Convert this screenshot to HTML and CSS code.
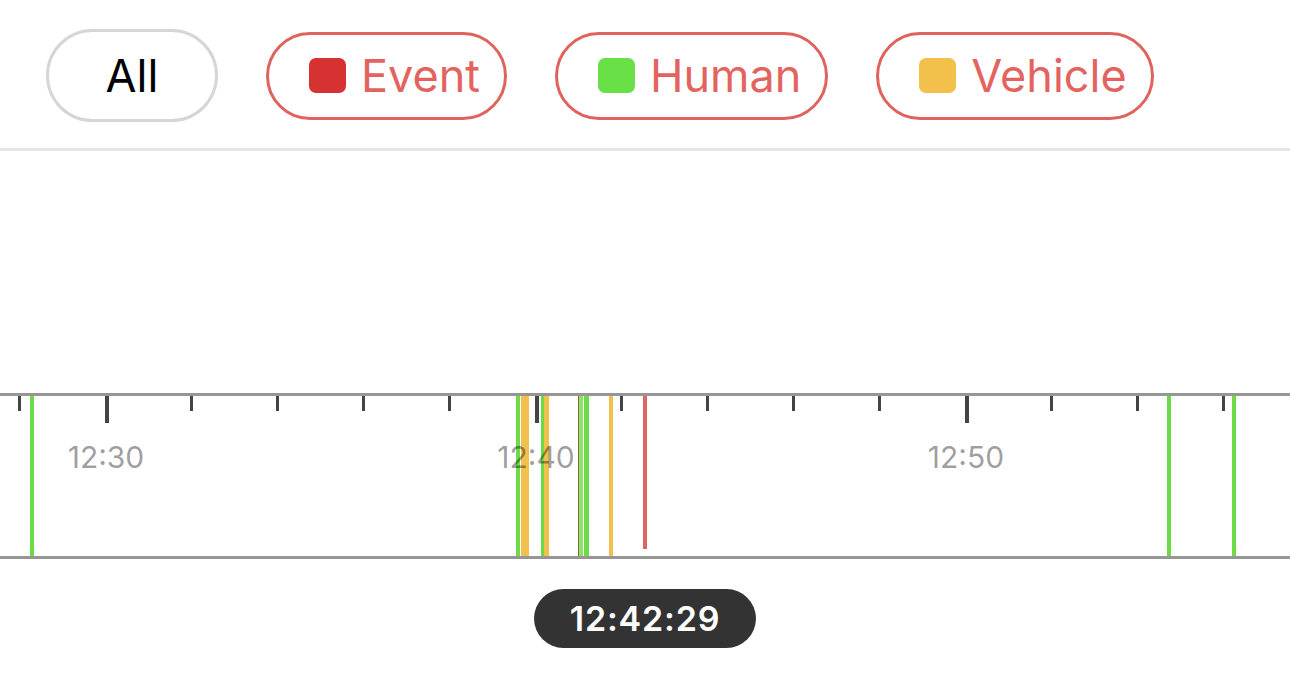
FILE: index.html
```html
<!DOCTYPE html>
<html lang="en">
<head>
    <meta charset="UTF-8">
    <meta name="viewport" content="width=device-width, initial-scale=1.0">
    <title>Timeline</title>
    <link rel="stylesheet" href="styles.css">
</head>
<body>
    <div class="filters">
        <button class="chip chip-all">All</button>
        <button class="chip chip-type"><span class="swatch swatch-event"></span>Event</button>
        <button class="chip chip-type"><span class="swatch swatch-human"></span>Human</button>
        <button class="chip chip-type"><span class="swatch swatch-vehicle"></span>Vehicle</button>
    </div>

    <div class="timeline">
        <!-- ticks every 2 minutes -->
        <span class="tick" style="left: 18px"></span>
        <span class="tick major" style="left: 105px"></span>
        <span class="tick" style="left: 190px"></span>
        <span class="tick" style="left: 276px"></span>
        <span class="tick" style="left: 362px"></span>
        <span class="tick" style="left: 448px"></span>
        <span class="tick major" style="left: 535px"></span>
        <span class="tick" style="left: 620px"></span>
        <span class="tick" style="left: 706px"></span>
        <span class="tick" style="left: 792px"></span>
        <span class="tick" style="left: 878px"></span>
        <span class="tick major" style="left: 965px"></span>
        <span class="tick" style="left: 1050px"></span>
        <span class="tick" style="left: 1136px"></span>
        <span class="tick" style="left: 1222px"></span>

        <!-- detections -->
        <span class="mark human" style="left: 30px; width: 4px"></span>
        <span class="mark human" style="left: 516px; width: 4px"></span>
        <span class="mark vehicle" style="left: 521px; width: 8px"></span>
        <span class="mark human" style="left: 541px; width: 3px"></span>
        <span class="mark vehicle" style="left: 544px; width: 5px"></span>
        <span class="mark vehicle-dark" style="left: 578px; width: 1px"></span>
        <span class="mark human light" style="left: 579px; width: 4px"></span>
        <span class="mark human" style="left: 584px; width: 5px"></span>
        <span class="mark vehicle" style="left: 609px; width: 4px"></span>
        <span class="mark human" style="left: 1167px; width: 4px"></span>
        <span class="mark human" style="left: 1232px; width: 4px"></span>

        <span class="cursor"></span>

        <span class="label" style="left: 106px">12:30</span>
        <span class="label" style="left: 536px">12:40</span>
        <span class="label" style="left: 966px">12:50</span>
    </div>

    <div class="current-time">12:42:29</div>
</body>
</html>
```

FILE: styles.css
```css
body {
    margin: 0;
    padding: 0;
    background: #fff;
    font-family: Inter, "Noto Sans", sans-serif;
}

.filters {
    display: flex;
    align-items: center;
    gap: 48px;
    padding: 29px 0 26px 46px;
    border-bottom: 3px solid #e5e5e5;
}

.chip {
    display: flex;
    align-items: center;
    box-sizing: border-box;
    background: #fff;
    font-family: inherit;
    font-size: 45px;
    font-weight: 400;
    cursor: pointer;
    border-radius: 50px;
}

.chip-all {
    justify-content: center;
    width: 172px;
    height: 93px;
    border: 3px solid #d6d6d6;
    color: #000;
}

.chip-type {
    height: 88px;
    padding: 0 24px 0 40px;
    gap: 15px;
    border: 3px solid #e0625c;
    color: #e3645f;
}

.swatch {
    display: inline-block;
    width: 37px;
    height: 35px;
    border-radius: 7px;
}

.swatch-event {
    background: #d63232;
}

.swatch-human {
    background: #68e046;
}

.swatch-vehicle {
    background: #f4c04c;
}

.timeline {
    position: relative;
    height: 160px;
    margin-top: 242px;
    border-top: 3px solid #969696;
    border-bottom: 3px solid #969696;
    overflow: hidden;
}

.tick {
    position: absolute;
    top: 0;
    width: 3px;
    height: 15px;
    background: #444;
}

.tick.major {
    width: 4px;
    height: 27px;
}

.mark {
    position: absolute;
    top: 0;
    bottom: 0;
}

.mark.human {
    background: #6bdc48;
}

.mark.human.light {
    background: #8ee070;
}

.mark.vehicle {
    background: #f2c04c;
}

.mark.vehicle-dark {
    background: #8a6d1f;
}

.cursor {
    position: absolute;
    top: 0;
    left: 643px;
    width: 4px;
    height: 153px;
    background: #e06560;
}

.label {
    position: absolute;
    top: 46px;
    transform: translateX(-50%);
    font-size: 30px;
    line-height: 30px;
    color: rgba(0, 0, 0, 0.4);
}

.current-time {
    display: flex;
    align-items: center;
    justify-content: center;
    width: 222px;
    height: 59px;
    margin: 30px auto 0;
    border-radius: 30px;
    background: #333;
    color: #fff;
    font-size: 34px;
    font-weight: 600;
    letter-spacing: 0.8px;
}
```
